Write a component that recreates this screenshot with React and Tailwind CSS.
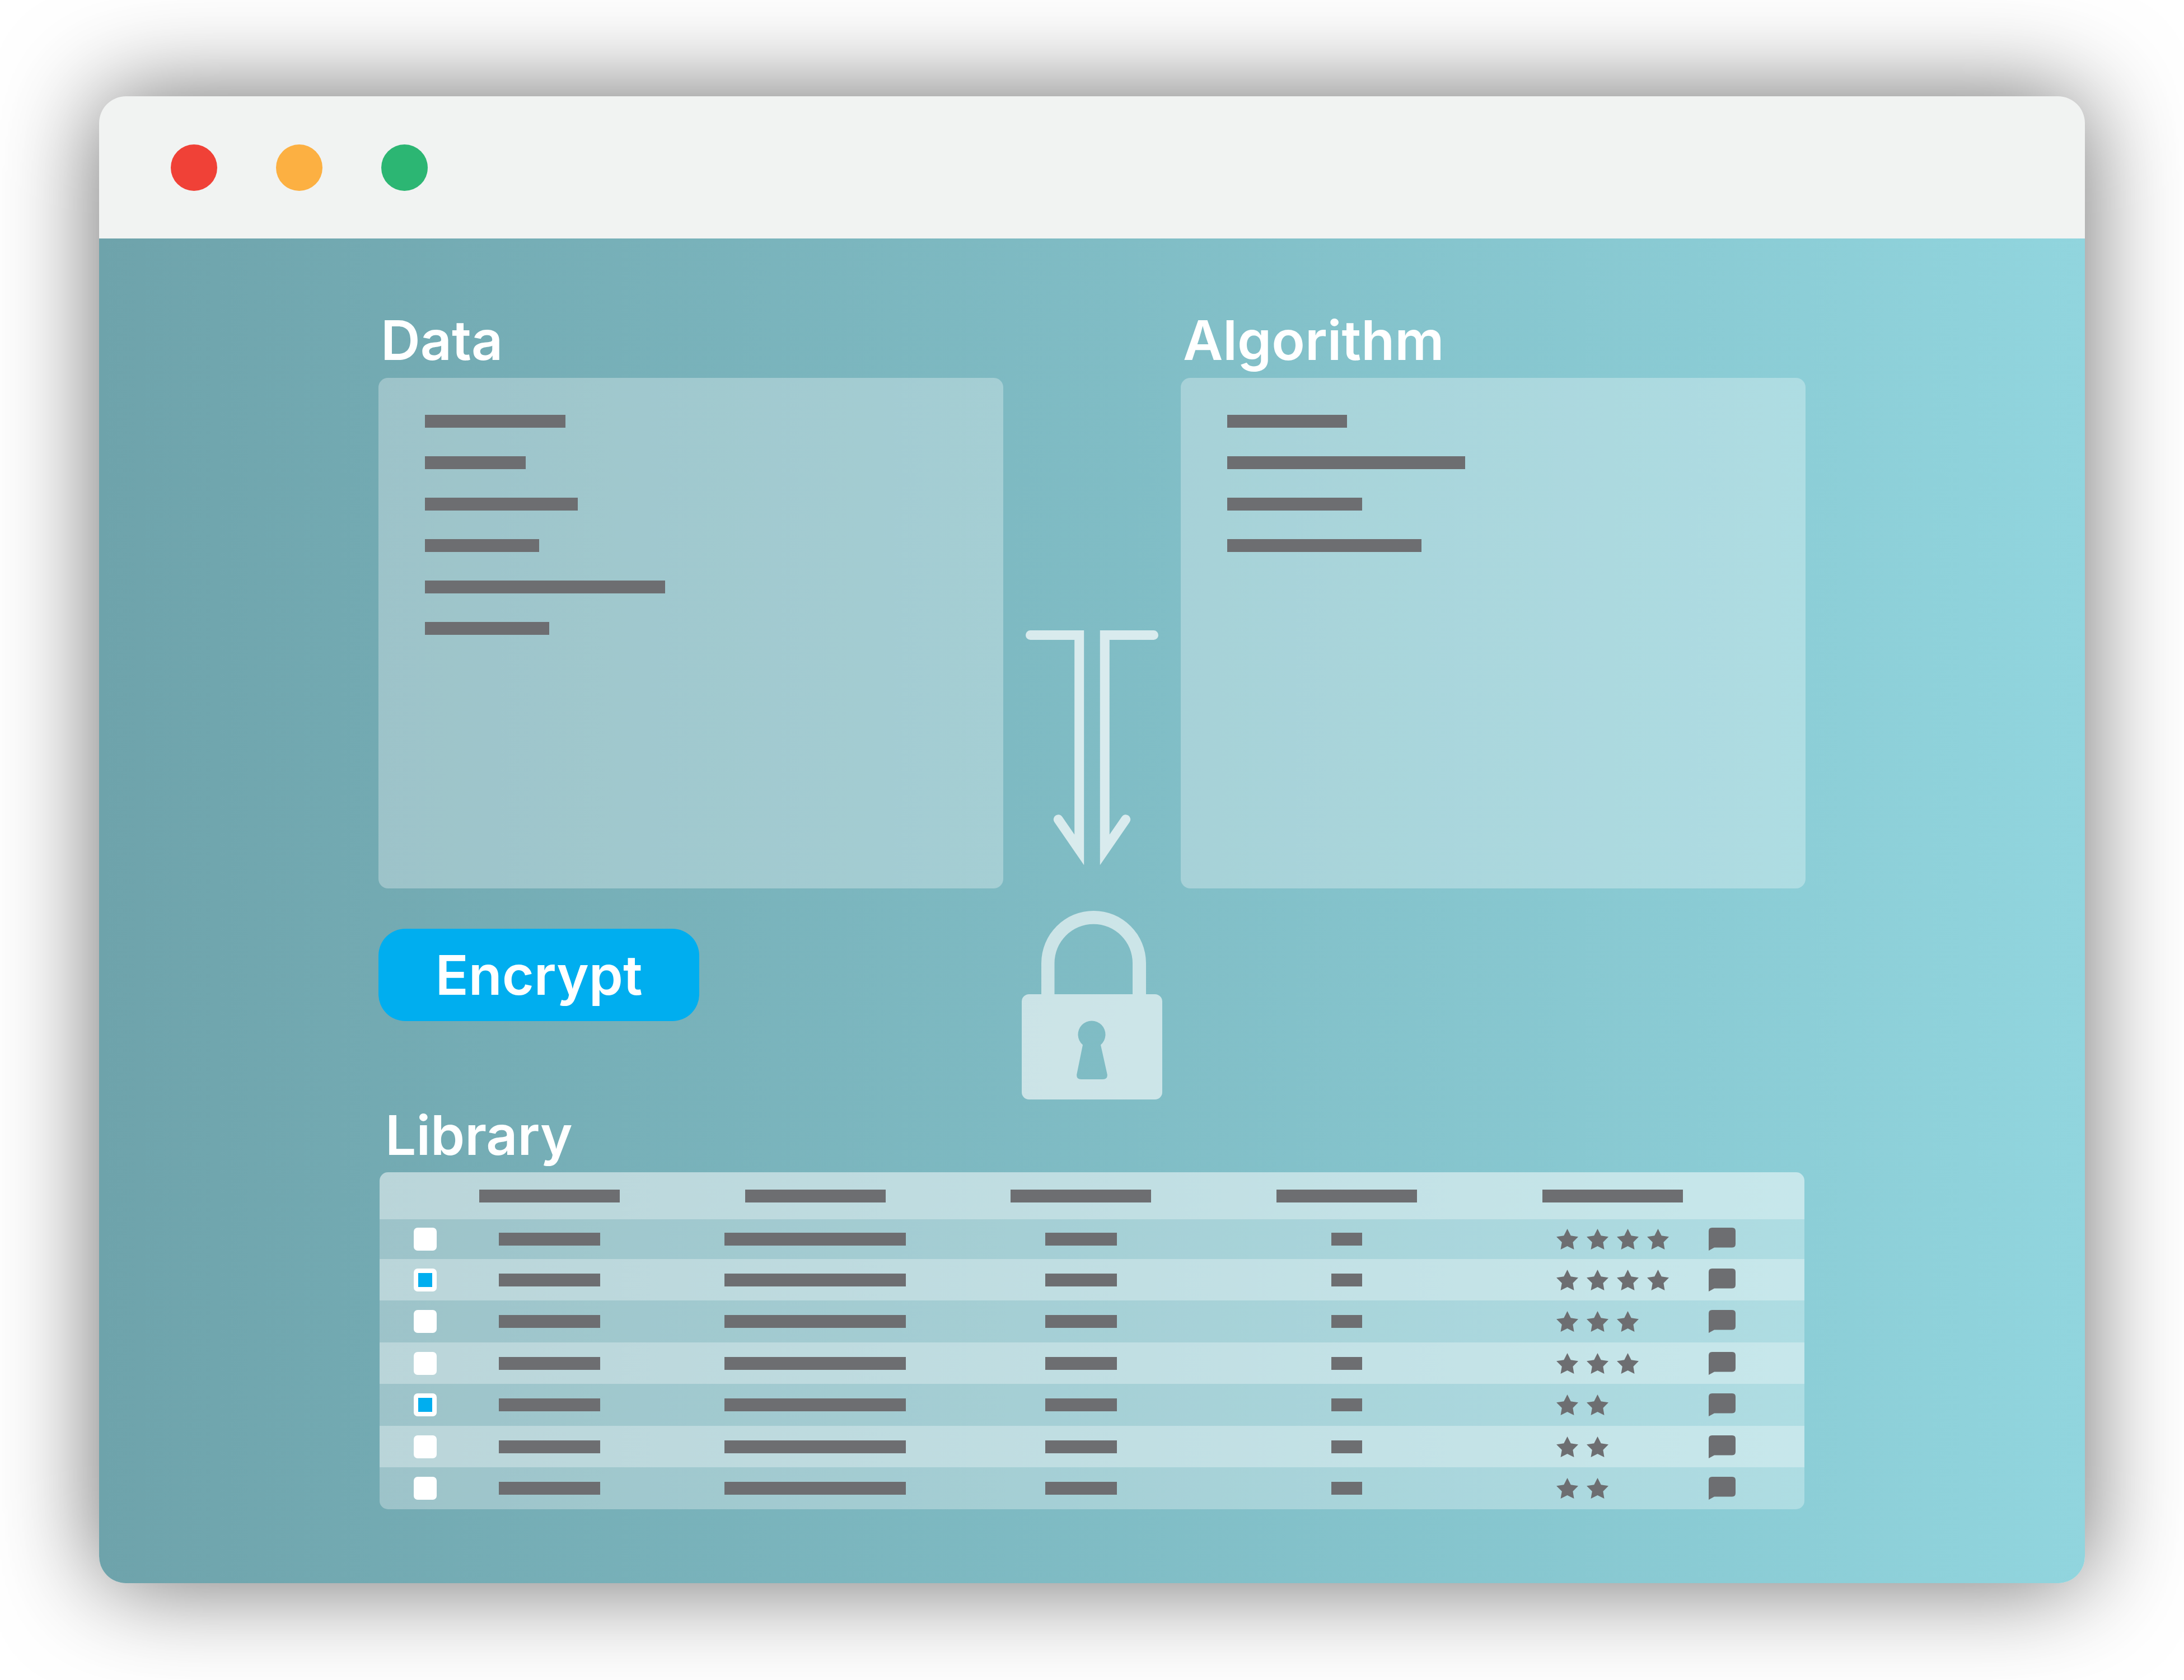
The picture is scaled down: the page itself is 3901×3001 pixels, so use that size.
const DATA_LINES = ['w-[251px]', 'w-[180px]', 'w-[273px]', 'w-[204px]', 'w-[429px]', 'w-[222px]'];
const ALGORITHM_LINES = ['w-[214px]', 'w-[425px]', 'w-[241px]', 'w-[347px]'];

const ROWS = [
  { id: 1, checked: false, stars: 4 },
  { id: 2, checked: true, stars: 4 },
  { id: 3, checked: false, stars: 3 },
  { id: 4, checked: false, stars: 3 },
  { id: 5, checked: true, stars: 2 },
  { id: 6, checked: false, stars: 2 },
  { id: 7, checked: false, stars: 2 },
];

const CELL_BARS = ['w-[181px]', 'w-[324px]', 'w-[128px]', 'w-[55px]'];

function Bar({ width }) {
  return <span className={`block h-[23px] bg-[#6d6e71] ${width}`} />;
}

function Panel({ title, lines }) {
  return (
    <section aria-label={title}>
      <h2 className="mb-[17px] pl-1 text-[98px] leading-[100px] font-semibold">{title}</h2>
      <div className="flex h-[912px] flex-col gap-[51px] rounded-[17px] bg-white/30 px-[83px] pt-[66px]">
        {lines.map((w) => (
          <Bar key={w} width={w} />
        ))}
      </div>
    </section>
  );
}

function MergeArrow() {
  return (
    <svg className="h-[419px] w-[237px]" viewBox="0 0 237 419" fill="none" aria-hidden="true">
      <g stroke="#fff" strokeOpacity="0.7" strokeWidth="17" strokeLinecap="round" strokeMiterlimit="10">
        <path d="M8.5 8.5H95.7V392L58.3 337.7" />
        <path d="M228.5 8.5H141.3V392L178.7 337.7" />
      </g>
    </svg>
  );
}

function Lock() {
  return (
    <svg className="h-[337px] w-[251px]" viewBox="0 0 251 337" aria-hidden="true">
      <path
        fill="#fff"
        fillOpacity="0.6"
        fillRule="evenodd"
        d="M35 149V93.5A93.5 93.5 0 0 1 222 93.5V149H238A13 13 0 0 1 251 162V324A13 13 0 0 1 238 337H13A13 13 0 0 1 0 324V162A13 13 0 0 1 13 149ZM58.5 149H198V93.5A69.75 69.75 0 0 0 58.5 93.5ZM109 239.5L98.2 292.5Q97.5 301 106 301H145Q153.5 301 152.8 292.5L141 239.5A24.5 24.5 0 1 0 109 239.5Z"
      />
    </svg>
  );
}

function Star() {
  return (
    <svg className="h-[37px] w-[39px]" viewBox="0 0 39 37" fill="#6d6e71" aria-hidden="true">
      <path d="M19.5 0L25.7 12.3L39 14.3L29.4 24L31.5 37L19.5 31L7.5 37L9.8 24L0 14.3L13.3 12.3Z" />
    </svg>
  );
}

function Comment() {
  return (
    <svg className="h-[41px] w-[48px]" viewBox="0 0 48 41" fill="#6d6e71" aria-hidden="true">
      <path d="M6 0H42Q48 0 48 6V29Q48 35.5 42 35.5H10L0 41V6Q0 0 6 0Z" />
    </svg>
  );
}

function Library() {
  return (
    <section aria-label="Library" className="mt-[14px] px-0.5">
      <h2 className="mb-4 pl-2.5 text-[98px] leading-[100px] font-semibold">Library</h2>
      <div className="overflow-hidden rounded-[15px]">
        <table className="w-full table-fixed border-collapse">
          <colgroup>
            <col className="w-[162px]" />
            <col className="w-[282px]" />
            <col className="w-[668px]" />
            <col className="w-[281px]" />
            <col className="w-[669px]" />
            <col className="w-[280px]" />
            <col />
          </colgroup>
          <thead>
            <tr className="h-[84px] bg-white/51">
              <td />
              {[1, 2, 3, 4, 5].map((n) => (
                <th key={n} scope="col" className="p-0">
                  <span className="flex justify-center">
                    <Bar width="w-[251px]" />
                  </span>
                </th>
              ))}
              <td />
            </tr>
          </thead>
          <tbody>
            {ROWS.map((row) => (
              <tr key={row.id} className="h-[75px] bg-white/30 first:h-[71px] even:h-[74px] even:bg-white/51">
                <td className="p-0">
                  <input
                    type="checkbox"
                    defaultChecked={row.checked}
                    aria-label={`Select row ${row.id}`}
                    className="mx-auto block size-[41px] appearance-none rounded-[7px] border-8 border-white bg-white bg-clip-padding checked:bg-[#00aeef]"
                  />
                </td>
                {CELL_BARS.map((w) => (
                  <td key={w} className="p-0">
                    <span className="flex justify-center">
                      <Bar width={w} />
                    </span>
                  </td>
                ))}
                <td className="p-0">
                  <span role="img" aria-label={`${row.stars} stars`} className="mx-auto flex w-[201px] gap-[15px]">
                    {Array.from({ length: row.stars }, (_, i) => (
                      <Star key={i} />
                    ))}
                  </span>
                </td>
                <td className="p-0 pl-8">
                  <button type="button" aria-label={`Comment on row ${row.id}`} className="block">
                    <Comment />
                  </button>
                </td>
              </tr>
            ))}
          </tbody>
        </table>
      </div>
    </section>
  );
}

export default function App() {
  return (
    <div className="min-h-screen bg-white px-[177px] py-[172px] font-['Inter',sans-serif] text-white">
      <div className="overflow-hidden rounded-[48px] bg-[#f1f3f2] shadow-[0_0_180px_rgba(0,0,0,0.58)]">
        <header className="flex h-[254px] items-center gap-[105px] px-32">
          <button type="button" aria-label="Close" className="size-[83px] rounded-full bg-[#f04137]" />
          <button type="button" aria-label="Minimize" className="size-[83px] rounded-full bg-[#fcb042]" />
          <button type="button" aria-label="Maximize" className="size-[83px] rounded-full bg-[#2cb673]" />
        </header>
        <main className="bg-linear-to-r/srgb from-[#6ea3ab] to-[#91d5de] px-[499px] py-[132px]">
          <div className="grid grid-cols-[1fr_317px_1fr]">
            <div>
              <Panel title="Data" lines={DATA_LINES} />
              <button
                type="button"
                className="mt-[72px] h-[165px] w-[573px] rounded-[48px] bg-[#00aeef] text-[98px] leading-[100px] font-semibold"
              >
                Encrypt
              </button>
            </div>
            <div className="flex flex-col items-center gap-[82px] pt-[568px]">
              <MergeArrow />
              <Lock />
            </div>
            <Panel title="Algorithm" lines={ALGORITHM_LINES} />
          </div>
          <Library />
        </main>
      </div>
    </div>
  );
}
